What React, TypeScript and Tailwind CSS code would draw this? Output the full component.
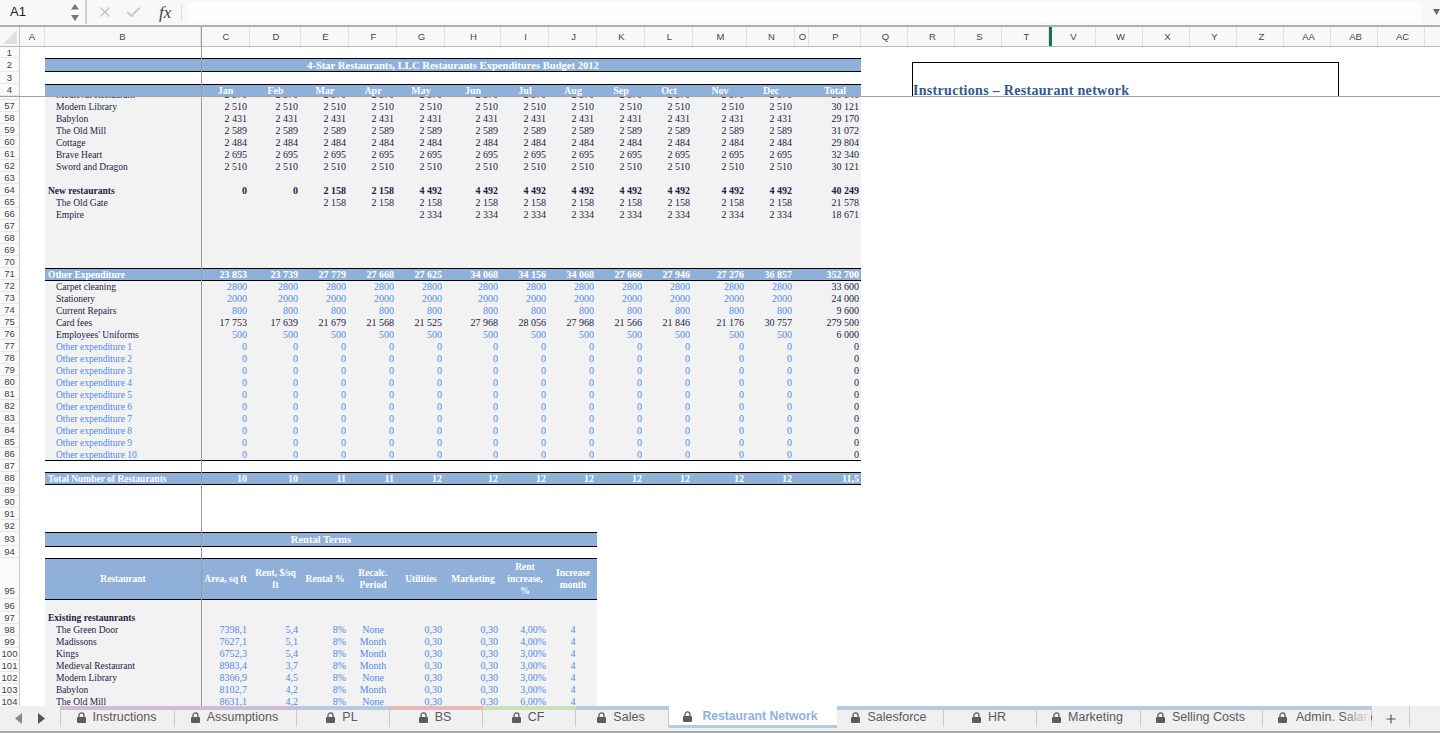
import { Check, Plus, X } from "lucide-react";
import type { ReactNode } from "react";

const budgetCols =
  "grid w-[816px] grid-cols-[156px_49px_51px_48px_48px_48px_56px_48px_48px_48px_48px_54px_48px_14px_52px]";
const rentalCols =
  "grid w-[552px] grid-cols-[156px_49px_51px_48px_48px_48px_56px_48px_48px]";

const columns = ["C", "D", "E", "F", "G", "H", "I", "J", "K", "L", "M", "N", "O", "P", "Q", "R", "S", "T", "V", "W", "X", "Y", "Z", "AA", "AB", "AC"];
const months = ["Jan", "Feb", "Mar", "Apr", "May", "Jun", "Jul", "Aug", "Sep", "Oct", "Nov", "Dec"];

const tones = {
  ink: "text-[#1b2344]",
  blue: "text-[#4f8be8]",
  white: "text-white font-bold",
  bold: "text-[#1b2344] font-bold",
};
type Tone = keyof typeof tones;

const fills = {
  gray: "bg-[#f2f2f2]",
  band: "bg-[#8fb1d9]",
  none: "bg-white",
};
type Fill = keyof typeof fills;

const rep = (v: string, n = 12) => Array<string>(n).fill(v);

type BudgetLine = {
  n: number;
  label?: string;
  vals?: string[];
  total?: string;
  tone?: Tone;
  labelTone?: Tone;
  totalTone?: Tone;
  fill?: Fill;
  line?: boolean;
  top?: boolean;
};

const budget: BudgetLine[] = [
  { n: 56, label: "Medieval Restaurant", vals: rep("2 570"), total: "30 840" },
  { n: 57, label: "Modern Library", vals: rep("2 510"), total: "30 121" },
  { n: 58, label: "Babylon", vals: rep("2 431"), total: "29 170" },
  { n: 59, label: "The Old Mill", vals: rep("2 589"), total: "31 072" },
  { n: 60, label: "Cottage", vals: rep("2 484"), total: "29 804" },
  { n: 61, label: "Brave Heart", vals: rep("2 695"), total: "32 340" },
  { n: 62, label: "Sword and Dragon", vals: rep("2 510"), total: "30 121" },
  { n: 63 },
  { n: 64, label: "New restaurants", top: true, labelTone: "bold", tone: "bold", totalTone: "bold", vals: ["0", "0", "2 158", "2 158", ...rep("4 492", 8)], total: "40 249" },
  { n: 65, label: "The Old Gate", vals: ["", "", ...rep("2 158", 10)], total: "21 578" },
  { n: 66, label: "Empire", vals: ["", "", "", "", ...rep("2 334", 8)], total: "18 671" },
  { n: 67 },
  { n: 68 },
  { n: 69 },
  { n: 70 },
  { n: 71, label: "Other Expenditure", top: true, line: true, fill: "band", labelTone: "white", tone: "white", totalTone: "white", vals: ["23 853", "23 739", "27 779", "27 668", "27 625", "34 068", "34 156", "34 068", "27 666", "27 946", "27 276", "36 857"], total: "352 700" },
  { n: 72, label: "Carpet cleaning", line: true, tone: "blue", vals: rep("2800"), total: "33 600" },
  { n: 73, label: "Stationery", tone: "blue", vals: rep("2000"), total: "24 000" },
  { n: 74, label: "Current Repairs", tone: "blue", vals: rep("800"), total: "9 600" },
  { n: 75, label: "Card fees", vals: ["17 753", "17 639", "21 679", "21 568", "21 525", "27 968", "28 056", "27 968", "21 566", "21 846", "21 176", "30 757"], total: "279 500" },
  { n: 76, label: "Employees' Uniforms", tone: "blue", vals: rep("500"), total: "6 000" },
  ...[1, 2, 3, 4, 5, 6, 7, 8, 9, 10].map((i) => ({
    n: 76 + i,
    label: `Other expenditure ${i}`,
    labelTone: "blue" as Tone,
    tone: "blue" as Tone,
    vals: rep("0"),
    total: "0",
  })),
  { n: 87, line: true, fill: "none" },
  { n: 88, label: "Total Number of Restaurants", top: true, line: true, fill: "band", labelTone: "white", tone: "white", totalTone: "white", vals: ["10", "10", "11", "11", ...rep("12", 8)], total: "11,5" },
  { n: 89, line: true, fill: "none" },
  { n: 90, fill: "none" },
  { n: 91, fill: "none" },
  { n: 92, fill: "none" },
];

const rental = [
  { n: 98, name: "The Green Door", v: ["7398,1", "5,4", "8%", "None", "0,30", "0,30", "4,00%", "4"] },
  { n: 99, name: "Madissons", v: ["7627,1", "5,1", "8%", "Month", "0,30", "0,30", "4,00%", "4"] },
  { n: 100, name: "Kings", v: ["6752,3", "5,4", "8%", "Month", "0,30", "0,30", "3,00%", "4"] },
  { n: 101, name: "Medieval Restaurant", v: ["8983,4", "3,7", "8%", "Month", "0,30", "0,30", "3,00%", "4"] },
  { n: 102, name: "Modern Library", v: ["8366,9", "4,5", "8%", "None", "0,30", "0,30", "3,00%", "4"] },
  { n: 103, name: "Babylon", v: ["8102,7", "4,2", "8%", "Month", "0,30", "0,30", "3,00%", "4"] },
  { n: 104, name: "The Old Mill", v: ["8631,1", "4,2", "8%", "None", "0,30", "0,30", "6,00%", "4"] },
];

const tabs = [
  { name: "Instructions", w: "w-[114px]", strip: "bg-[#cdbdd6]" },
  { name: "Assumptions", w: "w-[122px]", strip: "bg-[#cdbdd6]" },
  { name: "PL", w: "w-[93px]", strip: "bg-[#b8cade]" },
  { name: "BS", w: "w-[93px]", strip: "bg-[#e6b9b8]" },
  { name: "CF", w: "w-[93px]", strip: "bg-[#d0deb8]" },
  { name: "Sales", w: "w-[93px]", strip: "bg-[#b8cade]" },
];
const tabsAfter = [
  { name: "Salesforce", w: "w-[107px]" },
  { name: "HR", w: "w-[93px]" },
  { name: "Marketing", w: "w-[104px]" },
  { name: "Selling Costs", w: "w-[122px]" },
];

function RowNo({ n, className = "h-full items-center pt-px" }: { n: number; className?: string }) {
  return (
    <div className={`flex w-5 shrink-0 justify-center border-r border-b border-r-[#c6c6c6] border-b-[#e6e6e6] bg-[#fafafa] font-['Liberation_Sans',sans-serif] text-[9.5px] leading-3 text-[#444] ${className}`}>
      {n}
    </div>
  );
}

function Row({ n, h = "h-3", children, noClass }: { n: number; h?: string; children: ReactNode; noClass?: string }) {
  return (
    <div className={`flex ${h}`}>
      <RowNo n={n} className={noClass} />
      <div className="w-[25px] shrink-0" />
      {children}
    </div>
  );
}

function BudgetRow({ n, label, vals, total, tone = "ink", labelTone = "ink", totalTone = "ink", fill = "gray", line, top }: BudgetLine) {
  return (
    <Row n={n}>
      <div className={`${budgetCols} ${fills[fill]} ${line ? "border-t border-black" : "pt-px"} items-center`}>
        <div className={`whitespace-nowrap text-[9.5px] ${top ? "pl-[3px]" : "pl-[11px]"} ${tones[labelTone]}`}>{label}</div>
        {(vals ?? rep("")).map((v, i) => (
          <div key={i} className={`pr-[3px] text-right ${tones[tone]}`}>
            {v}
          </div>
        ))}
        <div />
        <div className={`pr-[2px] text-right ${tones[totalTone]}`}>{total}</div>
      </div>
    </Row>
  );
}

function Lock() {
  return (
    <svg width="9" height="11" viewBox="0 0 9 11" className="shrink-0">
      <path d="M2 5.500V3.400a2.500 2.500 0 0 1 5 0v2.100" fill="none" stroke="#5c5c5c" strokeWidth="1.3" />
      <rect x="0" y="5" width="9" height="6" rx="1" fill="#5c5c5c" />
    </svg>
  );
}

function Tab({ name, w, strip = "bg-[#b8cade]" }: { name: string; w: string; strip?: string }) {
  return (
    <div className={`flex shrink-0 flex-col ${w}`}>
      <div className={`h-1 ${strip}`} />
      <div className="flex h-[17px] items-center justify-center gap-[7px] border-r border-[#cacaca] pr-[2px] pb-[2px]">
        <Lock />
        <span className="text-[12.5px] leading-none text-[#5a5a5a]">{name}</span>
      </div>
    </div>
  );
}

export default function App() {
  return (
    <div className="relative flex h-[733px] w-[1440px] flex-col overflow-hidden bg-white font-['Liberation_Serif',serif] text-[10px] leading-3">
      {/* formula bar */}
      <div className="flex h-[27px] shrink-0 items-center border-b-2 border-[#b0b0b0] bg-[#f8f8f8] pb-[1px] font-['Liberation_Sans',sans-serif]">
        <div className="w-[71px] pl-[10px] text-[13px] text-[#222]">A1</div>
        <svg width="8" height="17" viewBox="0 0 8 17" className="shrink-0">
          <path d="M4 0l4 5.500H0z" fill="#777" />
          <path d="M0 11h8l-4 6z" fill="#777" />
        </svg>
        <div className="ml-[6px] h-full w-[2px] bg-[#cfcfcf]" />
        <X size={16} strokeWidth={2.6} className="ml-[10px] text-[#cbcbcb]" />
        <Check size={17} strokeWidth={2.8} className="ml-[12px] text-[#cbcbcb]" />
        <span className="ml-[17px] w-[16px] font-['Liberation_Serif',serif] text-[17px] italic leading-none text-[#444]">fx</span>
        <div className="ml-[6px] h-[15px] w-px bg-[#dddddd]" />
        <div className="ml-[6px] h-[21px] w-[1233px] bg-[#fefefe]" />
        <svg width="7" height="6" viewBox="0 0 7 6" className="ml-[12px] shrink-0">
          <path d="M0 0h7l-3.500 6z" fill="#666" />
        </svg>
      </div>

      {/* column letters */}
      <div className="grid h-5 shrink-0 grid-cols-[20px_25px_156px_49px_51px_48px_48px_48px_56px_48px_48px_48px_48px_54px_48px_14px_52px_repeat(12,47px)_1fr] border-b border-[#bcbcbc] bg-[#f8f8f8] font-['Liberation_Sans',sans-serif] text-[9.5px] text-[#444]">
        <div className="flex items-end justify-end border-r border-[#c6c6c6] pr-[2px] pb-[2px]">
          <svg width="14" height="14" viewBox="0 0 14 14">
            <path d="M14 0v14H0z" fill="#e0e0e0" />
          </svg>
        </div>
        <div className="flex items-center justify-center border-r border-[#e2e2e2]">A</div>
        <div className="flex items-center justify-center border-r border-[#e2e2e2]">B</div>
        {columns.map((c, i) => (
          <div key={c} className={`flex items-center justify-center border-r border-[#e2e2e2] ${c === "V" ? "border-l-[3px] border-l-[#12784a]" : i > 13 ? "pl-[3px]" : "pl-[2px]"}`}>
            {c}
          </div>
        ))}
        <div />
      </div>

      {/* frozen rows */}
      <div className="relative h-[50px] shrink-0 overflow-hidden border-b border-[#a2a2a2]">
        <Row n={1} h="h-[11px]">
          <div />
        </Row>
        <Row n={2} h="h-[14px]">
          <div className="flex w-[816px] items-center justify-center border-y border-black bg-[#8fb1d9] pt-px text-[10.6px] font-bold text-white">
            4-Star Restaurants, LLC Restaurants Expenditures Budget 2012
          </div>
        </Row>
        <Row n={3}>
          <div />
        </Row>
        <Row n={4}>
          <div className={`${budgetCols} items-center border-t border-black bg-[#8fb1d9] font-bold text-white`}>
            <div />
            {months.map((m) => (
              <div key={m} className="text-center">
                {m}
              </div>
            ))}
            <div />
            <div className="text-center">Total</div>
          </div>
        </Row>
        <div className="absolute top-[15px] left-[912px] h-[34px] w-[427px] border border-b-0 border-black">
          <div className="absolute -bottom-px left-0 text-[14px] font-bold leading-[13px] tracking-[0.3px] text-[#2f5a94]">
            Instructions – Restaurant network
          </div>
        </div>
      </div>

      {/* scrolled rows */}
      <div className="min-h-0 flex-1 overflow-hidden">
        <div className="-mt-[9px]">
          {budget.map((b) => (
            <BudgetRow key={b.n} {...b} />
          ))}
          <Row n={93} h="h-[14px]">
            <div className="flex w-[552px] items-center justify-center border-t border-black bg-[#8fb1d9] pt-px text-[10.5px] font-bold text-white">
              Rental Terms
            </div>
          </Row>
          <Row n={94}>
            <div className="w-[552px] border-t border-black" />
          </Row>
          <Row n={95} h="h-[41px]" noClass="h-full items-end pb-px">
            <div className={`${rentalCols} items-center border-t border-black bg-[#8fb1d9] text-center text-[9.5px] font-bold text-white`}>
              <div>Restaurant</div>
              <div>Area, sq ft</div>
              <div>
                Rent, $/sq
                <br />
                ft
              </div>
              <div>Rental %</div>
              <div>
                Recalc.
                <br />
                Period
              </div>
              <div>Utilities</div>
              <div>Marketing</div>
              <div>
                Rent
                <br />
                increase,
                <br />%
              </div>
              <div>
                Increase
                <br />
                month
              </div>
            </div>
          </Row>
          <Row n={96} h="h-[13px]">
            <div className="w-[552px] border-t border-black bg-[#f2f2f2]" />
          </Row>
          <Row n={97}>
            <div className="flex w-[552px] items-center bg-[#f2f2f2] pl-[3px] text-[9.5px] font-bold text-[#1b2344]">Existing restaunrants</div>
          </Row>
          {rental.map((r) => (
            <Row key={r.n} n={r.n}>
              <div className={`${rentalCols} items-center bg-[#f2f2f2] text-[#4f8be8]`}>
                <div className="pl-[11px] text-[9.5px] text-[#1b2344]">{r.name}</div>
                {r.v.map((v, i) => (
                  <div key={i} className={i === 3 || i === 7 ? "text-center" : "pr-[3px] text-right"}>
                    {v}
                  </div>
                ))}
              </div>
            </Row>
          ))}
        </div>
      </div>

      {/* sheet tabs */}
      <div className="flex h-[27px] shrink-0 items-start border-b-2 border-[#a8a8a8] bg-[#f0f0f0] font-['Liberation_Sans',sans-serif]">
        <div className="flex h-[21px] w-[61px] shrink-0 items-center gap-[16px] border-r border-[#cacaca] pt-[4px] pl-[15px]">
          <svg width="7" height="11" viewBox="0 0 7 11">
            <path d="M7 0v11L0 5.500z" fill="#8a8a8a" />
          </svg>
          <svg width="7" height="11" viewBox="0 0 7 11">
            <path d="M0 0v11l7-5.500z" fill="#555" />
          </svg>
        </div>
        {tabs.map((t) => (
          <Tab key={t.name} {...t} />
        ))}
        <div className="flex h-[22px] w-[168px] shrink-0 items-center justify-center gap-[10px] border-b-[3px] border-[#b8cade] bg-white pt-[1px] pr-[5px]">
          <Lock />
          <span className="text-[12.2px] font-bold leading-none text-[#8fb1dc]">Restaurant Network</span>
        </div>
        {tabsAfter.map((t) => (
          <Tab key={t.name} {...t} />
        ))}
        <div className="relative flex w-[109px] shrink-0 flex-col overflow-hidden">
          <div className="h-1 bg-[#b8cade]" />
          <div className="flex h-[17px] items-center gap-[9px] border-r border-[#cacaca] pb-[2px] pl-[15px]">
            <Lock />
            <span className="whitespace-nowrap text-[12.5px] leading-none text-[#5a5a5a]">Admin. Salaries</span>
          </div>
          <div className="absolute top-1 right-px h-[17px] w-[30px] bg-linear-to-r from-transparent to-[#f0f0f0]" />
        </div>
        <div className="flex h-[21px] w-[38px] shrink-0 items-center justify-center border-r border-[#cacaca] pt-[4px]">
          <Plus size={14} strokeWidth={2} className="text-[#555]" />
        </div>
      </div>

      {/* freeze pane line */}
      <div className="absolute top-[27px] left-[201px] h-[679px] w-px bg-[#9c9c9c]" />
    </div>
  );
}
